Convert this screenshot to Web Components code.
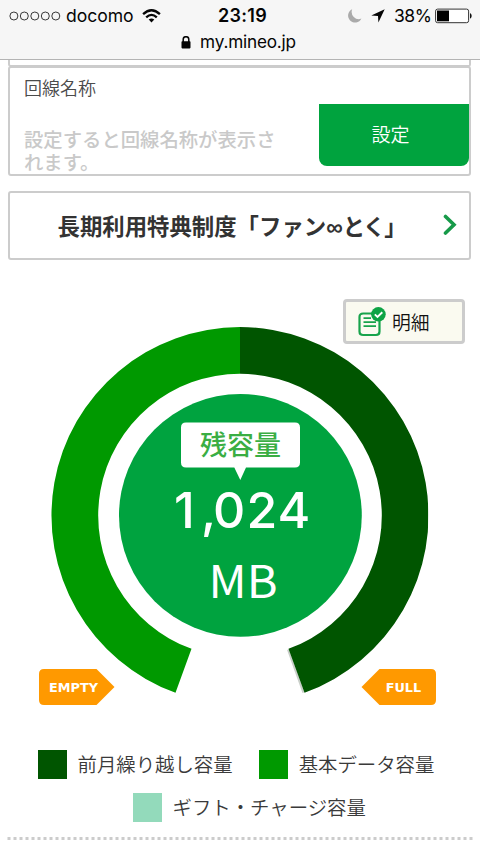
<!DOCTYPE html>
<html lang="ja">
<head>
<meta charset="utf-8">
<title>my.mineo.jp</title>
<style>
html,body{margin:0;padding:0;background:#fff}
body{font-family:"Noto Sans CJK JP",sans-serif;color:#3c3c3c;width:480px;height:852px;overflow:hidden}
</style>
</head>
<body>
<data-page></data-page>
<script>
const define = (name, markup) => {
  const t = document.createElement('template');
  t.innerHTML = markup;
  customElements.define(name, class extends HTMLElement {
    constructor() {
      super();
      this.attachShadow({mode: 'open'}).appendChild(t.content.cloneNode(true));
    }
  });
};

define('status-bar', `<style>
:host{display:block;box-sizing:border-box;height:60px;background:#f6f6f6;border-bottom:1px solid #b4b4b4;font-family:Inter,sans-serif;color:#050505}
.row{display:grid;grid-template-columns:218px 1fr 133px;height:31px;align-items:center;line-height:31px;font-size:17.6px}
.l,.r{display:flex;align-items:center;height:31px}
.l{padding-left:9px}
.docomo{margin-left:5px;width:68px;letter-spacing:-.05px;white-space:nowrap}
.wifi{margin-left:8px}
.time{font-weight:600;font-size:18px;letter-spacing:.3px}
.pct{width:37px;margin-left:9px;font-size:17.5px;letter-spacing:-.5px;white-space:nowrap}
.bat{margin-left:4px}
.url{display:flex;justify-content:center;align-items:center;height:22px;gap:9px;font-size:17.2px;line-height:22px;padding-right:3px;letter-spacing:-.2px}
svg{display:block;flex:none}
</style>
<div class="row">
<div class="l"><svg width="52" height="12" viewBox="0 0 52 12" fill="none" stroke="#222" stroke-width=".9"><circle cx="4.9" cy="6" r="4"/><circle cx="15.3" cy="6" r="4"/><circle cx="25.8" cy="6" r="4"/><circle cx="36.3" cy="6" r="4"/><circle cx="46.8" cy="6" r="4"/></svg>
<span class="docomo">docomo</span>
<svg class="wifi" width="19" height="14" viewBox="0 0 19 14" fill="none" stroke="#050505" stroke-width="2.3"><path d="M1.1 5.2Q9.5-2.7 17.9 5.2M4.2 8.4Q9.5 3.4 14.8 8.4"/><path d="M9.5 13.4L6.7 10.6Q9.5 8.2 12.3 10.6Z" fill="#050505" stroke="none"/></svg></div>
<span class="time">23:19</span>
<div class="r"><svg width="15" height="16" viewBox="0 0 15 16"><path d="M5.2 1.2A7 7 0 1 0 14.4 10.6A7.2 7.2 0 0 1 5.2 1.2Z" fill="#aaa"/></svg>
<svg width="14" height="14" viewBox="0 0 14 14" style="margin-left:9px"><path d="M13.7.3L7.4 13.6L7 7L.3 6.6Z" fill="#050505"/></svg>
<span class="pct">38%</span>
<svg class="bat" width="38" height="16" viewBox="0 0 38 16"><rect x=".6" y="1.1" width="33" height="13.6" rx="2" fill="#fff" stroke="#333"/><rect x="2" y="2.5" width="12" height="10.8" fill="#000"/><path d="M35 5.3C37.2 5.6 37.2 10.2 35 10.5Z" fill="#111"/></svg></div>
</div>
<div class="url"><svg width="10" height="13" viewBox="0 0 10 13"><path d="M2.2 6V3.5a2.8 2.8 0 0 1 5.6 0V6" fill="none" stroke="#050505" stroke-width="1.5"/><rect x=".5" y="5.2" width="9" height="7.2" rx=".8" fill="#050505"/></svg><span>my.mineo.jp</span></div>`);

define('panel-box', `<style>
:host{display:block;box-sizing:border-box;border:2px solid #ccc;border-radius:3px;background:#fff;overflow:hidden}
</style><slot></slot>`);

define('line-name', `<style>
:host{display:grid;grid-template-columns:1fr 150px;grid-template-rows:36px 1fr;height:105px;padding-left:14.5px}
.label{grid-column:1/3;font-size:18px;line-height:26px;padding-top:6px;height:30px;color:#4b4b4b;font-weight:350}
.hint{font-family:"Liberation Sans","Noto Sans CJK JP",sans-serif;font-size:19.35px;line-height:23px;padding-top:25px;color:#c9c9c9;font-weight:500;white-space:nowrap;height:44px}
.btn{height:62px;background:#00a33e;color:#fff;border-radius:0 0 8px 8px;display:flex;align-items:center;justify-content:center;font-size:19px;box-sizing:border-box;padding:0 7px 3px 0;font-weight:350}
</style><div class="label">回線名称</div><div class="hint">設定すると回線名称が表示さ<br>れます。</div><div class="btn">設定</div>`);

define('benefit-link', `<style>
:host{display:flex;height:63px;align-items:center;justify-content:space-between;padding:0 12px 0 48px;font-size:22.4px;font-weight:700;color:#333;white-space:nowrap}
i{font-style:normal;font-family:"Liberation Sans",sans-serif;font-size:23px;display:inline-block;width:16.5px}
u{text-decoration:none;letter-spacing:-1.3px}
svg{display:block}
</style><span>長期利用特典制度「ファン<i>∞</i><u>とく」</u></span>
<svg width="14" height="22" viewBox="0 0 14 22"><path d="M2.5 2.5L11 10.8L2.5 19" fill="none" stroke="#179a49" stroke-width="3.6" stroke-linecap="round"/></svg>`);

define('detail-button', `<style>
:host{display:flex;box-sizing:border-box;width:122px;height:45px;border:3px solid #ccc;border-radius:4px;background:#fafaf0;align-items:center;padding-left:12px;gap:6px;color:#111;font-size:18.8px;font-weight:350}
svg{display:block}
span{line-height:39px}
</style><svg width="28" height="31" viewBox="0 0 28 31"><path d="M15 7.5H5.2Q1.5 7.5 1.5 11V25.5Q1.5 29 5.2 29H18Q21.5 29 21.5 25.5V15" fill="none" stroke="#17a34b" stroke-width="2.2"/><path d="M5.5 12.2H13M5.5 16.2H18M5.5 20.2H18" stroke="#17a34b" stroke-width="1.8"/><circle cx="20.4" cy="8.3" r="7.3" fill="#0da345"/><path d="M16.8 8.4L19.5 11L24.3 6.3" fill="none" stroke="#fff" stroke-width="1.9"/></svg><span>明細</span>`);

define('capacity-gauge', `<style>
:host{display:block;height:404px}
svg{display:block}
</style><svg width="480" height="404" viewBox="0 310 480 404">
<defs><clipPath id="edge"><rect x="50" y="310" width="378.2" height="404"/></clipPath></defs>
<path d="M288 649.7L303.4 692.7" stroke="#c9cfc9" stroke-width="2"/>
<path d="M240 327A188.6 188.6 0 0 0 175.5 692.8L191.5 648.85A141.8 141.8 0 0 1 240 373.8Z" fill="#090"/>
<path clip-path="url(#edge)" d="M240 327A188.6 188.6 0 0 1 304.5 692.8L288.5 648.85A141.8 141.8 0 0 0 240 373.8Z" fill="#050"/>
<circle cx="240.4" cy="515.4" r="121.4" fill="#00a33f"/>
<path d="M186 422.5H295Q300 422.5 300 427.5V462.5Q300 467.5 295 467.5H246L240.3 480L234.3 467.5H186Q181 467.5 181 462.5V427.5Q181 422.5 186 422.5Z" fill="#fff"/>
<text x="200" y="455" font-family="Noto Sans CJK JP" font-size="27" font-weight="500" fill="#3aae43" textLength="81">残容量</text>
<text y="528" font-family="Inter" font-weight="500" font-size="50" fill="#fff" x="174 201 213 246.5 277.5">1,024</text>
<text x="208.5" y="598" font-family="Noto Sans CJK JP" font-size="44.5" font-weight="400" fill="#fff" textLength="69" lengthAdjust="spacingAndGlyphs">MB</text>
<path d="M44 669H96.5L114.5 687L96.5 705H44Q39 705 39 700V674Q39 669 44 669Z" fill="#f90"/>
<path d="M431 669H379.5L361.5 687L379.5 705H431Q436 705 436 700V674Q436 669 431 669Z" fill="#f90"/>
<g font-family="DejaVu Sans" font-weight="700" font-size="13" fill="#fff"><text x="49" y="692.2" textLength="49" lengthAdjust="spacingAndGlyphs">EMPTY</text><text x="385.7" y="692.2" textLength="35.5" lengthAdjust="spacingAndGlyphs">FULL</text></g>
</svg>`);

define('legend-item', `<style>
:host{display:flex;align-items:center;gap:10.5px;height:29px;font-size:19.4px;line-height:29px;white-space:nowrap;color:#3a3a3a;font-weight:350}
b{display:block;width:29px;height:29px;background:var(--swatch)}
span{height:31px}
</style><b></b><span><slot></slot></span>`);

define('data-page', `<style>
:host{display:block}
main{display:block;padding:0 9px 0 7.5px}
.prev{height:7px;border-top:0;border-radius:0 0 3px 3px;margin-bottom:-1px;box-sizing:border-box}
.a{height:110px}
.b{margin-top:15px;height:69px}
.gauge{position:relative;height:404px;margin-top:50px}
detail-button{position:absolute;left:343px;top:-11px}
.legend{display:flex;gap:26.5px;padding-left:38px;margin-top:36px}
.second{padding-left:133px;margin-top:14px}
svg{display:block;margin-top:15px}
</style>
<status-bar></status-bar>
<main><panel-box class="prev"></panel-box><panel-box class="a"><line-name></line-name></panel-box><panel-box class="b"><benefit-link></benefit-link></panel-box></main>
<div class="gauge"><capacity-gauge></capacity-gauge><detail-button></detail-button></div>
<div class="legend"><legend-item style="--swatch:#050">前月繰り越し容量</legend-item><legend-item style="--swatch:#090">基本データ容量</legend-item></div>
<div class="legend second"><legend-item style="--swatch:#93dabb">ギフト・チャージ容量</legend-item></div>
<svg width="480" height="4"><path d="M7.5 1.5H473" stroke="#ccc" stroke-width="3" stroke-dasharray="3 3"/></svg>`);
</script>
</body>
</html>
